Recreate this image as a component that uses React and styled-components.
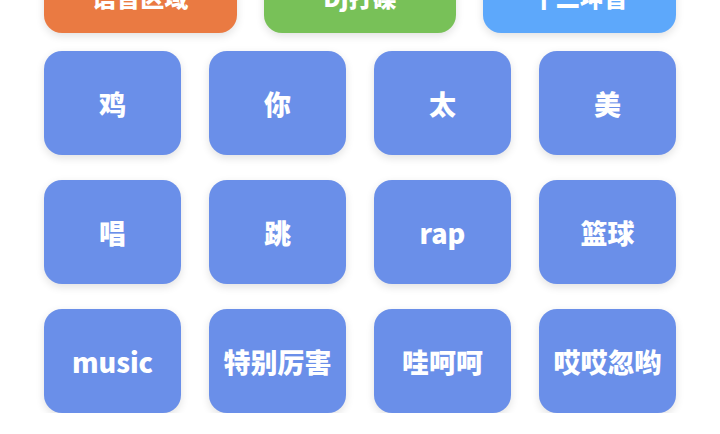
import styled, { createGlobalStyle } from 'styled-components'

const GlobalStyle = createGlobalStyle`
  html, body {
    margin: 0;
    padding: 0;
    background: #ffffff;
    overflow: hidden;
  }
  body {
    font-family: "Noto Sans CJK SC", "Noto Sans", sans-serif;
  }
`

const modes = [
  { label: '语音区域', color: '#ea7a42' },
  { label: 'Dj打碟', color: '#78c158' },
  { label: '十二坤音', color: '#5da8fb' }
]

const sounds = ['鸡', '你', '太', '美', '唱', '跳', 'rap', '篮球', 'music', '特别厉害', '哇呵呵', '哎哎忽哟']

export default function App () {
  return (
    <>
      <GlobalStyle />
      <Page>
        <ModeRow>
          {modes.map((m) => (
            <ModeButton key={m.label} $color={m.color}>{m.label}</ModeButton>
          ))}
        </ModeRow>
        <SoundGrid>
          {sounds.map((s) => (
            <SoundButton key={s}>{s}</SoundButton>
          ))}
        </SoundGrid>
      </Page>
    </>
  )
}

const Page = styled.div`
  margin-top: -40px;
  padding: 0 44px 0 44px;
  display: flex;
  flex-direction: column;
  gap: 18px;
`
const ModeRow = styled.div`
  display: grid;
  grid-template-columns: repeat(3, 1fr);
  gap: 27px;
`
const ModeButton = styled.button`
  height: 73px;
  border: none;
  border-radius: 18px;
  background-color: ${(p) => p.$color};
  color: #ffffff;
  font-family: inherit;
  font-size: 24px;
  font-weight: 900;
  box-shadow: 0 3px 8px rgba(0, 0, 0, 0.12);
  cursor: pointer;
`
const SoundGrid = styled.div`
  display: grid;
  grid-template-columns: repeat(4, 1fr);
  column-gap: 28px;
  row-gap: 25px;
`
const SoundButton = styled.button`
  height: 104px;
  border: none;
  border-radius: 18px;
  background-color: #6a8fe9;
  color: #ffffff;
  font-family: inherit;
  font-size: 27px;
  font-weight: 900;
  box-shadow: 0 3px 8px rgba(0, 0, 0, 0.12);
  cursor: pointer;
  padding: 0;
`
